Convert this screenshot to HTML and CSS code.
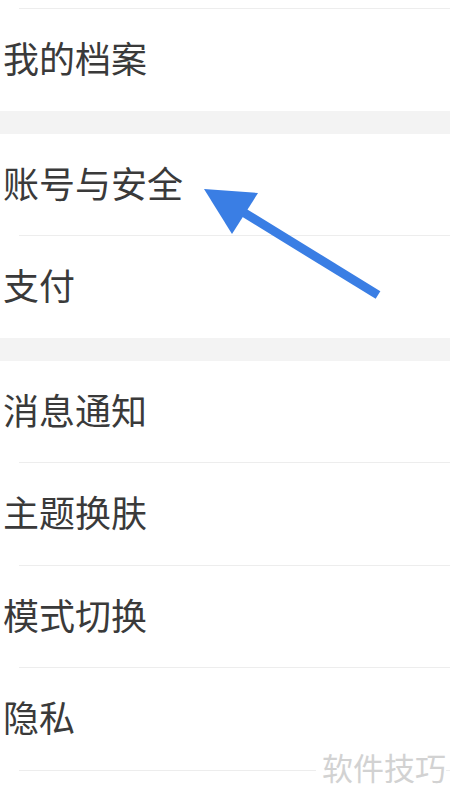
FILE: index.html
```html
<!DOCTYPE html>
<html lang="zh-CN">
<head>
<meta charset="utf-8">
<title>设置</title>
<link rel="stylesheet" href="styles.css">
</head>
<body>
<div class="page">
  <div class="top-spacer"></div>
  <div class="divider"></div>
  <section class="group">
    <div class="row">我的档案</div>
  </section>
  <div class="gap"></div>
  <section class="group">
    <div class="row">账号与安全</div>
    <div class="divider"></div>
    <div class="row">支付</div>
  </section>
  <div class="gap"></div>
  <section class="group">
    <div class="row">消息通知</div>
    <div class="divider"></div>
    <div class="row">主题换肤</div>
    <div class="divider"></div>
    <div class="row">模式切换</div>
    <div class="divider"></div>
    <div class="row">隐私</div>
    <div class="divider"></div>
  </section>

  <svg class="arrow" viewBox="0 0 450 801" width="450" height="801" aria-hidden="true">
    <line x1="378" y1="295" x2="238" y2="209" stroke="#3a7ee4" stroke-width="9" stroke-linecap="butt"/>
    <polygon points="204,189 258,193 232,234" fill="#3a7ee4"/>
  </svg>
  <div class="watermark">软件技巧</div>
</div>
</body>
</html>
```

FILE: styles.css
```css
html, body {
  margin: 0;
  padding: 0;
  background: #ffffff;
}

.page {
  position: relative;
  width: 450px;
  height: 801px;
  overflow: hidden;
  background: #ffffff;
  font-family: "Noto Sans CJK SC", "Noto Sans", sans-serif;
}

.top-spacer {
  height: 8px;
}

.divider {
  height: 1px;
  margin-left: 19px;
  background: #ededed;
}

.gap {
  height: 23px;
  background: #f3f3f3;
}

.group {
  display: flex;
  flex-direction: column;
}

.row {
  height: 101.5px;
  box-sizing: border-box;
  display: flex;
  align-items: center;
  padding-left: 3px;
  padding-bottom: 5px;
  font-size: 36px;
  line-height: 1;
  color: #3a3a3a;
}

.arrow {
  position: absolute;
  left: 0;
  top: 0;
  pointer-events: none;
}

.watermark {
  position: absolute;
  right: 4px;
  top: 747px;
  padding-left: 6px;
  background: #ffffff;
  font-size: 31px;
  line-height: 40px;
  color: #d2d2d2;
}
```
